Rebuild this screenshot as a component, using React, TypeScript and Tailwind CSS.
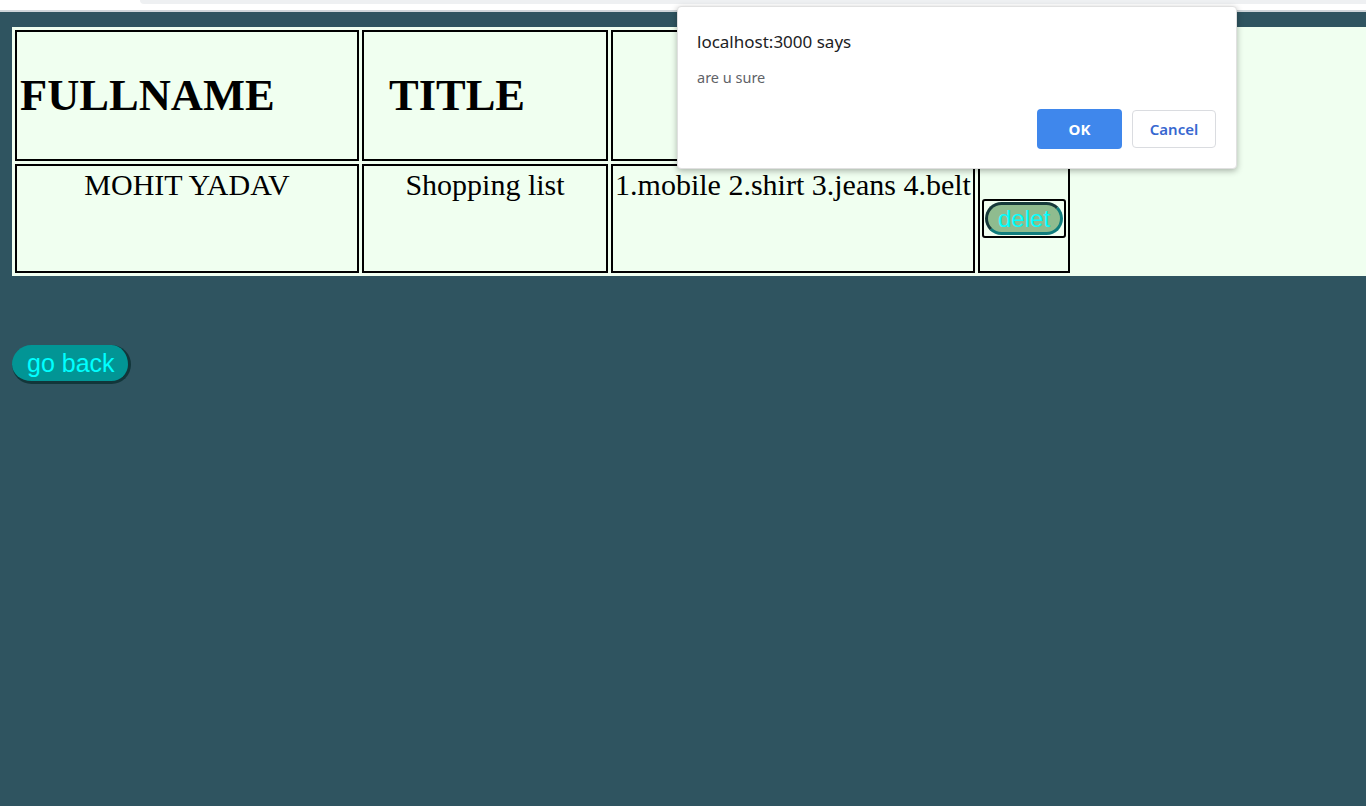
import React from 'react';

const serif = { fontFamily: '"Liberation Serif", "Times New Roman", serif' };

const App = () => {
  return (
    <div className="min-h-screen bg-[#2f5460] flex flex-col">
      {/* browser chrome strip */}
      <div className="bg-white">
        <div className="h-[4px] flex">
          <div className="w-[140px]" />
          <div className="flex-1 bg-[#eef0f2] rounded-bl-[6px]" />
        </div>
        <div className="h-[6px]" />
        <div className="h-[2px] bg-[#cfd6da]" />
      </div>

      <div className="pt-[15px] pl-[12px]" style={serif}>
        <div className="bg-[#f0fff0]">
          <table className="border-separate border-spacing-[3px] text-black">
            <tbody>
              <tr>
                <th className="p-0 border-2 border-black">
                  <div className="w-[340px] h-[127px] flex items-center pl-[3px] text-[44.5px] font-bold">
                    FULLNAME
                  </div>
                </th>
                <th className="p-0 border-2 border-black">
                  <div className="w-[242px] h-[127px] flex items-center pl-[25px] text-[44.5px] font-bold">
                    TITLE
                  </div>
                </th>
                <th className="p-0 border-2 border-black">
                  <div className="w-[360px] h-[127px]" />
                </th>
                <th className="p-0 border-2 border-black">
                  <div className="w-[88px] h-[127px]" />
                </th>
              </tr>
              <tr>
                <td className="p-0 border-2 border-black align-top">
                  <div className="w-[340px] h-[105px] pt-[2px] text-center text-[30px] leading-[33px]">
                    MOHIT YADAV
                  </div>
                </td>
                <td className="p-0 border-2 border-black align-top">
                  <div className="w-[242px] h-[105px] pt-[2px] text-center text-[30px] leading-[33px]">
                    Shopping list
                  </div>
                </td>
                <td className="p-0 border-2 border-black align-top">
                  <div className="w-[360px] h-[105px] pt-[2px] text-center text-[30px] leading-[33px] whitespace-nowrap">
                    1.mobile 2.shirt 3.jeans 4.belt
                  </div>
                </td>
                <td className="p-0 border-2 border-black">
                  <div className="w-[88px] h-[105px] flex items-center pl-[2px]">
                    <div className="border-2 border-black rounded-[3px] p-px">
                      <button
                        className="h-[33px] px-[10px] rounded-full border-[3px] border-t-[#163a3a] border-l-[#163a3a] border-r-[#0f7d7d] border-b-[#0f7d7d] bg-[#8fbc8f] text-[#00ffff] text-[24px] leading-none"
                        style={{ fontFamily: '"Liberation Sans", Arial, sans-serif' }}
                      >
                        delet
                      </button>
                    </div>
                  </div>
                </td>
              </tr>
            </tbody>
          </table>
        </div>

        <div className="mt-[69px]">
          <button
            className="h-[39px] pl-[15px] pr-[13px] rounded-full border-r-[3px] border-b-[3px] border-r-[#12363a] border-b-[#12363a] bg-[#029595] text-[#00ffff] text-[25px] leading-none"
            style={{ fontFamily: '"Liberation Sans", Arial, sans-serif' }}
          >
            go back
          </button>
        </div>
      </div>

      {/* confirm dialog */}
      <div
        className="absolute left-[677px] top-[6px] w-[560px] h-[163px] bg-white rounded-[4px] border border-[#e0e0e0] shadow-[0_2px_6px_rgba(0,0,0,0.3)] px-[19px] pt-[21px]"
        style={{ fontFamily: '"Noto Sans", "Open Sans", sans-serif' }}
      >
        <div className="text-[17px] leading-[28px] text-[#202124]">localhost:3000 says</div>
        <div className="mt-[11px] text-[14.5px] leading-[20px] text-[#5f6368]">are u sure</div>
        <div className="flex justify-end gap-[10px] mt-[22px] pr-px">
          <button className="w-[85px] h-[40px] rounded-[4px] bg-[#3f87ec] text-white text-[15px] font-bold">
            OK
          </button>
          <button className="w-[84px] h-[38px] mt-px rounded-[4px] border border-[#dadce0] bg-white text-[#3767d0] text-[15px] font-semibold">
            Cancel
          </button>
        </div>
      </div>
    </div>
  );
};

export default App;
